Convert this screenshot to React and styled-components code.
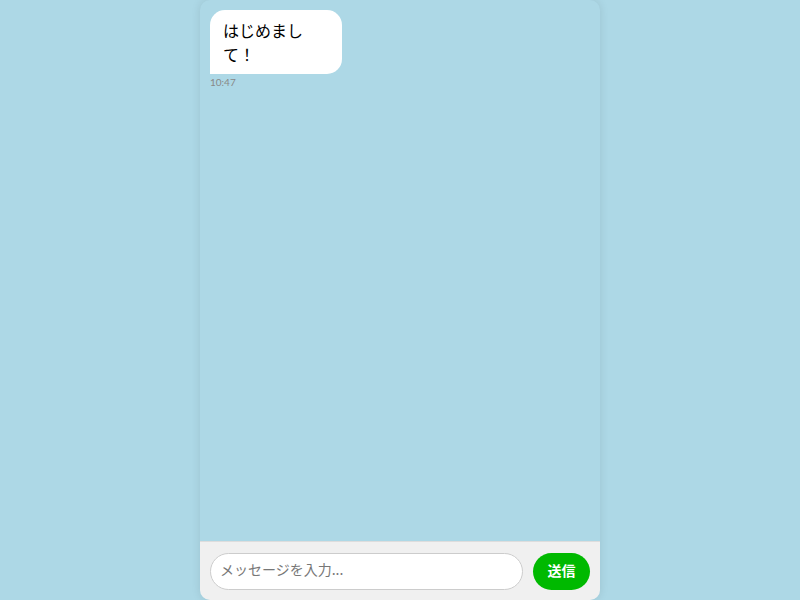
import React from "react";
import styled, { createGlobalStyle } from "styled-components";

const Global = createGlobalStyle`
  html, body { margin: 0; padding: 0; height: 100%; }
  body {
    background: #add8e6;
    font-family: "Noto Sans CJK JP", "Noto Sans", sans-serif;
  }
  #root { height: 100%; }
`;

const Page = styled.div`
  height: 600px;
  display: flex;
  justify-content: center;
`;

const Phone = styled.div`
  width: 400px;
  height: 600px;
  background: #add8e6;
  border-radius: 10px;
  box-shadow: 0 0 10px rgba(0, 0, 0, 0.1);
  display: flex;
  flex-direction: column;
  overflow: hidden;
`;

const Messages = styled.div`
  flex: 1;
  padding: 10px;
  display: flex;
  flex-direction: column;
  align-items: flex-start;
`;

const Message = styled.div`
  display: flex;
  flex-direction: column;
  align-items: ${(p) => (p.$mine ? "flex-end" : "flex-start")};
`;

const Bubble = styled.div`
  box-sizing: border-box;
  max-width: 132px;
  padding: 8px 13px;
  background: #fff;
  color: #000;
  font-size: 16px;
  line-height: 24px;
  border-radius: 15px 15px 15px 0;
`;

const Time = styled.div`
  margin-top: 2px;
  font-family: "Lato", "Liberation Sans", sans-serif;
  font-weight: 400;
  font-size: 10px;
  color: #888;
`;

const InputBar = styled.div`
  display: flex;
  align-items: center;
  gap: 10px;
  padding: 11px 10px 10px;
  background: #f0f0f0;
  border-top: 1px solid #ddd;
`;

const Input = styled.input`
  flex: 1;
  height: 37px;
  box-sizing: border-box;
  border: 1px solid #ccc;
  border-radius: 20px;
  padding: 0 9px 5px;
  font-size: 14px;
  font-family: "Noto Sans CJK JP", sans-serif;
  background: #fff;
  outline: none;
  &::placeholder { color: #777; }
`;

const SendButton = styled.button`
  height: 37px;
  width: 57px;
  border: none;
  border-radius: 20px;
  background: #00b900;
  color: #fff;
  font-weight: bold;
  font-size: 14px;
  font-family: "Noto Sans CJK JP", sans-serif;
  padding: 0 0 4px;
`;

export default function App() {
  return (
    <Page>
      <Global />
      <Phone>
        <Messages>
          <Message>
            <Bubble>はじめまして！</Bubble>
            <Time>10:47</Time>
          </Message>
        </Messages>
        <InputBar>
          <Input placeholder="メッセージを入力..." />
          <SendButton>送信</SendButton>
        </InputBar>
      </Phone>
    </Page>
  );
}
